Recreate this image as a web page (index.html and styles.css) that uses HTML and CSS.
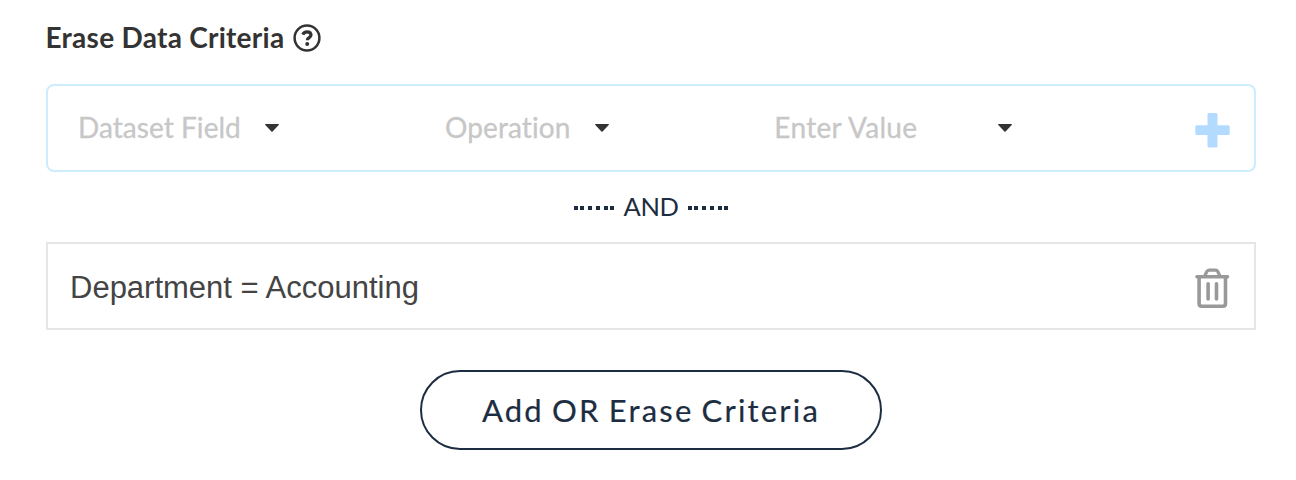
FILE: index.html
```html
<!DOCTYPE html>
<html lang="en">
<head>
<meta charset="utf-8">
<title>Erase Data Criteria</title>
<link rel="stylesheet" href="styles.css">
</head>
<body>
<main class="panel">
  <header class="heading">
    <h1 class="title">Erase Data Criteria</h1>
    <svg class="help" width="28" height="28" viewBox="0 0 28 28" fill="none" stroke="#333" stroke-width="2.5">
      <circle cx="14" cy="14" r="12.400"/>
      <path d="M9.800 10.600C10.600 8.700 12 7.900 14 7.900c2.300 0 4 1.200 4 3.100 0 2.700-3.700 2.400-3.700 5.200" stroke-width="3.200"/>
      <circle cx="14.200" cy="19.900" r="2" fill="#333" stroke="none"/>
    </svg>
  </header>
  <section class="editor">
    <div class="select field"><span class="hint hint-field">Dataset Field</span><svg class="caret" width="14" height="8" viewBox="0 0 14 8"><path d="M.5 0h13q.7.4.2 1L7.6 7.5q-.6.5-1.2 0L.3 1Q-.2.4.5 0z"/></svg></div>
    <div class="select operation"><span class="hint hint-operation">Operation</span><svg class="caret" width="14" height="8" viewBox="0 0 14 8"><path d="M.5 0h13q.7.4.2 1L7.6 7.5q-.6.5-1.2 0L.3 1Q-.2.4.5 0z"/></svg></div>
    <div class="select value"><span class="hint hint-value">Enter Value</span><svg class="caret" width="14" height="8" viewBox="0 0 14 8"><path d="M.5 0h13q.7.4.2 1L7.6 7.5q-.6.5-1.2 0L.3 1Q-.2.4.5 0z"/></svg></div>
    <svg class="plus" width="35" height="35" viewBox="0 0 35 35"><path d="M14 0h7q1.5 0 1.5 1.5v10.8h10.7q1.5 0 1.5 1.5v6.8q0 1.5-1.5 1.5H22.500v10.900q0 1.500-1.500 1.500h-7q-1.500 0-1.500-1.500V22.100H1.800Q.3 22.100.3 20.600v-6.800q0-1.500 1.500-1.500h10.700V1.500Q12.500 0 14 0z"/></svg>
  </section>
  <div class="joiner">
    <svg class="dots" width="40" height="4"><path d="M0 0h4v4H0zM6 0h4v4H6zM14 0h4v4h-4zM22 0h4v4h-4zM30 0h4v4h-4zM36 0h4v4h-4z"/></svg>
    <span class="and">AND</span>
    <svg class="dots" width="40" height="4"><path d="M0 0h4v4H0zM6 0h4v4H6zM14 0h4v4h-4zM22 0h4v4h-4zM30 0h4v4h-4zM36 0h4v4h-4z"/></svg>
  </div>
  <section class="criterion">
    <span class="rule">Department = Accounting</span>
    <svg class="trash" width="36" height="40" viewBox="0 0 36 40" fill="none" stroke="#999" stroke-linecap="round" stroke-linejoin="round">
      <path d="M2 8.800h30.500" stroke-width="3.600"/>
      <path d="M4.100 9v26.500q0 2.700 2.700 2.700h21q2.700 0 2.700-2.700V9" stroke-width="3.600"/>
      <path d="M9.700 8l2-4.200q.8-1.600 2.500-1.600h6.200q1.700 0 2.500 1.600l2 4.200" stroke-width="3.200"/>
      <path d="M13.100 15.800v15.100M21.500 15.800v15.100" stroke-width="3.600"/>
    </svg>
  </section>
  <button class="add" type="button">Add OR Erase Criteria</button>
</main>
</body>
</html>
```
FILE: styles.css
```css
* { box-sizing: border-box; }
body { margin: 0; background: #fff; }
svg { display: block; flex: none; }
.panel {
  display: flex;
  flex-direction: column;
  width: 1296px;
  height: 480px;
  padding: 19px 40px 0 46px;
  font-family: Lato, sans-serif;
  font-variant-ligatures: none;
}
.heading { display: flex; align-items: center; gap: 9px; height: 36px; }
.title { width: 238px; margin: 0; font-size: 28px; line-height: 36px; font-weight: 700; letter-spacing: .27px; text-indent: -.5px; color: #333; white-space: nowrap; }
.help { margin-top: 1px; }
.editor {
  display: flex;
  align-items: center;
  height: 88px;
  margin-top: 29px;
  padding-left: 30px;
  border: 2px solid #cdecfd;
  border-radius: 8px;
}
.select { display: flex; align-items: center; }
.field { width: 367px; }
.operation { width: 330px; }
.value { width: 420px; }
.hint {
  padding-bottom: 2px;
  font-size: 28px;
  line-height: 36px;
  color: #c7c7c7;
  white-space: nowrap;
  -webkit-text-stroke: .3px #c7c7c7;
}
.hint-field { width: 187px; letter-spacing: .05px; }
.hint-operation { width: 150px; letter-spacing: .1px; }
.hint-value { width: 223px; letter-spacing: .32px; text-indent: -.7px; }
.caret { fill: #333; }
.plus { margin-top: 4px; fill: #b3dbff; }
.joiner {
  display: flex;
  align-items: center;
  height: 70px;
  padding-left: 528px;
  color: #1d2d41;
}
.dots { fill: currentColor; margin-top: 2px; }
.and { width: 74px; padding-bottom: 2px; text-align: center; font-size: 25.5px; line-height: 34px; letter-spacing: -.4px; }
.criterion {
  display: flex;
  align-items: center;
  justify-content: space-between;
  height: 88px;
  padding: 0 23px 0 22px;
  border: 2px solid #e6e6e6;
}
.rule { padding-top: 4px; font-family: "Liberation Sans", Arial, sans-serif; font-size: 31px; line-height: 40px; color: #444; white-space: nowrap; }
.trash { margin-top: 4px; }
.add {
  width: 462px;
  height: 80px;
  margin: 40px 0 0 374px;
  padding: 0;
  border: 2px solid #1d2d41;
  border-radius: 40px;
  background: #fff;
  color: #1d2d41;
  font: 400 31px/40px Lato, sans-serif;
  letter-spacing: 2.2px;
  word-spacing: -2px;
  white-space: nowrap;
  -webkit-text-stroke: .2px #1d2d41;
}
```
